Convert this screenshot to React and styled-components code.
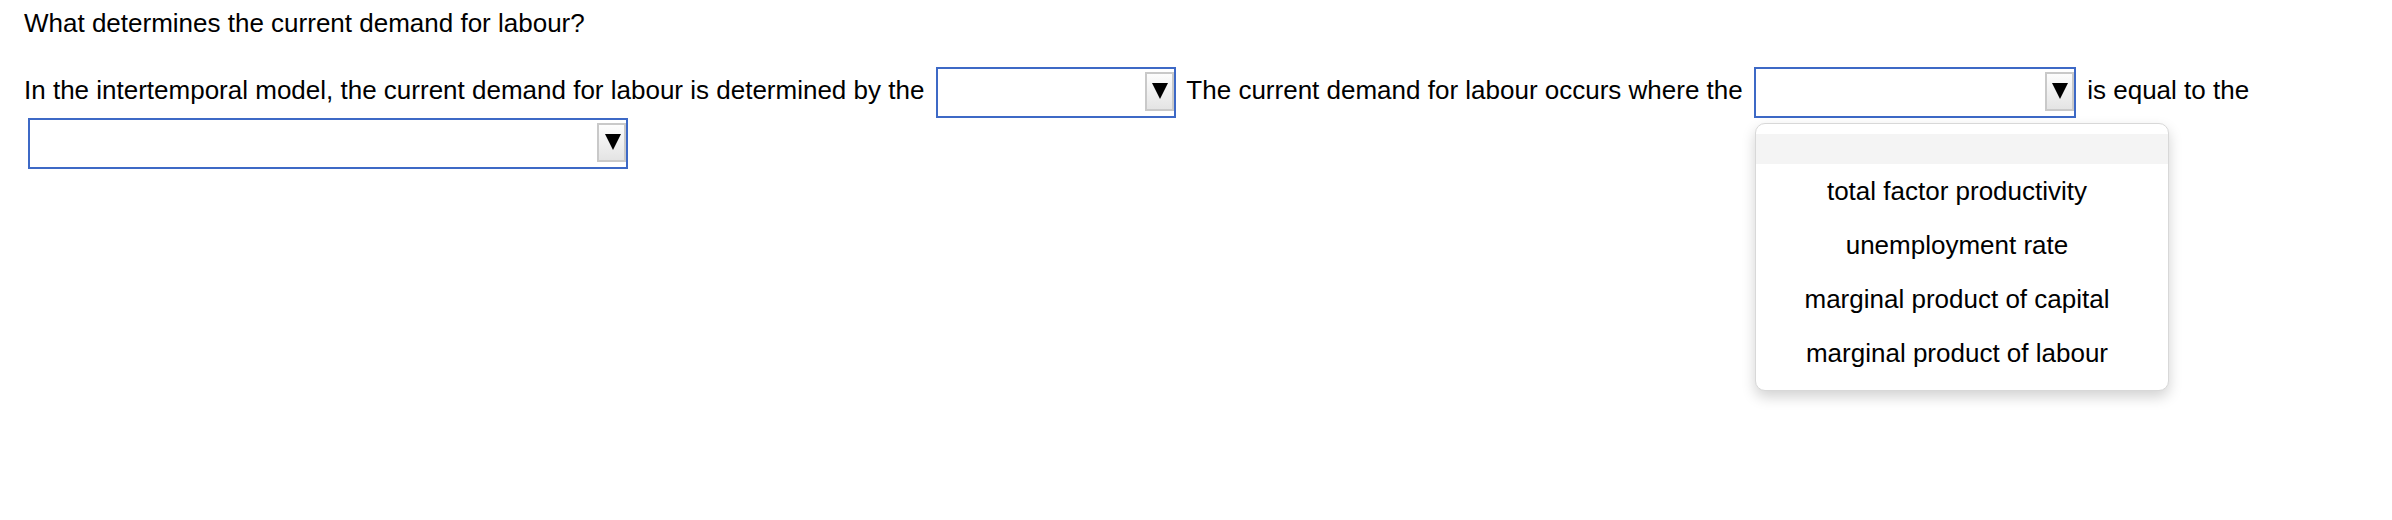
import React from "react";
import styled, { createGlobalStyle } from "styled-components";

const GlobalStyle = createGlobalStyle`
  body {
    margin: 0;
    background: #fff;
  }
`;

const Page = styled.div`
  box-sizing: border-box;
  min-height: 100vh;
  padding: 8px 24px 0;
  font-family: "Liberation Sans", Arial, sans-serif;
  font-size: 26px;
  color: #000;
`;

const Question = styled.div`
  line-height: 30px;
`;

const Paragraph = styled.p`
  margin: 29px 0 0;
  line-height: 30px;
`;

const Select = styled.span`
  position: relative;
  display: inline-flex;
  justify-content: flex-end;
  align-items: flex-start;
  vertical-align: middle;
  box-sizing: border-box;
  width: ${(p) => p.$width}px;
  height: 51px;
  margin: 0 4px;
  padding-top: 3px;
  border: 2px solid #3d69c6;
  background: #fff;
  z-index: ${(p) => (p.$open ? 5 : "auto")};
`;

const ArrowButton = styled.span`
  display: flex;
  justify-content: center;
  align-items: center;
  box-sizing: border-box;
  width: 29px;
  height: 39px;
  padding: 0 0 2px 2px;
  border: 2px solid #c9c9c9;
  background: linear-gradient(#fdfdfd, #e4e4e4);

  &::after {
    content: "";
    width: 0;
    height: 0;
    border-left: 8px solid transparent;
    border-right: 8px solid transparent;
    border-top: 16px solid #000;
  }
`;

const Menu = styled.div`
  position: absolute;
  top: calc(100% + 7px);
  left: -1px;
  z-index: 10;
  box-sizing: border-box;
  width: 414px;
  padding: 10px 0;
  border: 1px solid #d8d8d8;
  border-radius: 10px;
  background: #fff;
  box-shadow: 0 6px 14px rgba(0, 0, 0, 0.18);
`;

const BlankOption = styled.div`
  height: 30px;
  background: #f4f4f4;
`;

const Option = styled.div`
  padding-right: 10px;
  line-height: 54px;
  text-align: center;
  white-space: nowrap;
`;

const options = [
  "total factor productivity",
  "unemployment rate",
  "marginal product of capital",
  "marginal product of labour",
];

const Dropdown = ({ width, open }) => (
  <Select $width={width} $open={open}>
    <ArrowButton />
    {open && (
      <Menu>
        <BlankOption />
        {options.map((o) => (
          <Option key={o}>{o}</Option>
        ))}
      </Menu>
    )}
  </Select>
);

export default function App() {
  return (
    <>
      <GlobalStyle />
      <Page>
        <Question>What determines the current demand for labour?</Question>
        <Paragraph>
          In the intertemporal model, the current demand for labour is
          determined by the <Dropdown width={240} /> The current demand for
          labour occurs where the <Dropdown width={322} open /> is equal to the{" "}
          <Dropdown width={600} />
        </Paragraph>
      </Page>
    </>
  );
}
